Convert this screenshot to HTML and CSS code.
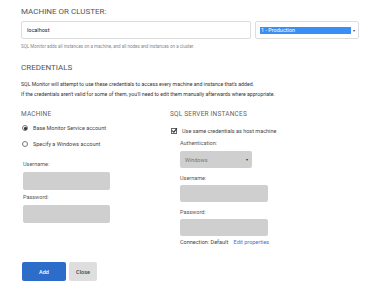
FILE: index.html
```html
<!DOCTYPE html>
<html lang="en">
<head>
    <meta charset="UTF-8">
    <title>Add Machine</title>
    <link rel="stylesheet" href="styles.css">
</head>
<body>
    <div class="page">
        <h2 class="section-title">Machine or cluster:</h2>
        <div class="host-row">
            <input class="text-input host-input" type="text" value="localhost">
            <div class="group-select">
                <span class="group-value">1 - Production</span>
                <span class="caret">&#9662;</span>
            </div>
        </div>
        <p class="hint">SQL Monitor adds all instances on a machine, and all nodes and instances on a cluster.</p>

        <h2 class="section-title creds-title">Credentials</h2>
        <p class="intro">SQL Monitor will attempt to use these credentials to access every machine and instance that's added.<br>
        If the credentials aren't valid for some of them, you'll need to edit them manually afterwards where appropriate.</p>

        <div class="columns">
            <div class="col col-machine">
                <h3 class="col-title">Machine</h3>
                <label class="option">
                    <span class="radio checked"></span>
                    Base Monitor Service account
                </label>
                <label class="option">
                    <span class="radio"></span>
                    Specify a Windows account
                </label>
                <div class="field first-field">
                    <div class="field-label">Username:</div>
                    <div class="grey-input"></div>
                </div>
                <div class="field">
                    <div class="field-label">Password:</div>
                    <div class="grey-input"></div>
                </div>
            </div>

            <div class="col col-sql">
                <h3 class="col-title">SQL Server instances</h3>
                <label class="option check-option">
                    <span class="checkbox">
                        <svg width="7" height="7" viewBox="0 0 7 7"><path d="M1.2 3.6 L2.9 5.2 L5.9 1.4" fill="none" stroke="#333" stroke-width="1.1"/></svg>
                    </span>
                    Use same credentials as host machine
                </label>
                <div class="indent">
                    <div class="field auth-field">
                        <div class="field-label">Authentication:</div>
                        <div class="grey-select">
                            <span>Windows</span>
                            <span class="caret">&#9662;</span>
                        </div>
                    </div>
                    <div class="field">
                        <div class="field-label">Username:</div>
                        <div class="grey-input"></div>
                    </div>
                    <div class="field">
                        <div class="field-label">Password:</div>
                        <div class="grey-input"></div>
                    </div>
                    <div class="connection">Connection: Default <a class="link" href="#">Edit properties</a></div>
                </div>
            </div>
        </div>

        <div class="actions">
            <button class="btn btn-primary">Add</button>
            <button class="btn btn-plain">Close</button>
        </div>
    </div>
</body>
</html>
```

FILE: styles.css
```css
body {
    margin: 0;
    padding: 0;
    font-family: Roboto, 'Liberation Sans', sans-serif;
    color: #333;
    background: #fff;
}

.page {
    padding: 7px 0 0 21px;
}

.section-title {
    margin: 0;
    font-size: 8px;
    line-height: 10px;
    font-weight: 400;
    text-transform: uppercase;
    color: #555;
}

.host-row {
    display: flex;
    gap: 4px;
    margin-top: 4px;
}

.text-input {
    box-sizing: border-box;
    height: 18px;
    border: 1px solid #ddd;
    border-radius: 2px;
    padding: 0 5px;
    font-family: inherit;
    font-size: 5.5px;
    color: #222;
    outline: none;
}

.host-input {
    width: 230px;
}

.group-select {
    box-sizing: border-box;
    width: 104px;
    height: 18px;
    border: 1px solid #ddd;
    border-radius: 2px;
    display: flex;
    align-items: center;
    padding: 0 3px 0 4px;
}

.group-value {
    width: 90px;
    height: 7px;
    line-height: 7px;
    background: #3b8ef3;
    color: #fff;
    font-size: 5.5px;
    padding-left: 1px;
}

.caret {
    margin-left: auto;
    font-size: 4px;
    color: #444;
}

.hint {
    margin: 5px 0 0;
    font-size: 4.5px;
    line-height: 6px;
    color: #888;
}

.creds-title {
    margin-top: 13px;
}

.intro {
    margin: 6px 0 0;
    font-size: 5.2px;
    line-height: 10px;
    color: #333;
}

.columns {
    display: flex;
    margin-top: 11px;
}

.col-machine {
    width: 149px;
}

.col-title {
    margin: 0;
    font-size: 6.5px;
    line-height: 8px;
    font-weight: 400;
    letter-spacing: 0.2px;
    text-transform: uppercase;
    color: #666;
}

.option {
    display: flex;
    align-items: center;
    gap: 5px;
    margin-top: 6px;
    height: 8px;
    font-size: 5.5px;
    color: #444;
}

.option + .option {
    margin-top: 8px;
}

.radio {
    box-sizing: border-box;
    width: 6px;
    height: 6px;
    margin-left: 1px;
    border: 0.7px solid #777;
    border-radius: 50%;
    position: relative;
}

.radio.checked::after {
    content: "";
    position: absolute;
    left: 1.2px;
    top: 1.2px;
    width: 2.6px;
    height: 2.6px;
    border-radius: 50%;
    background: #333;
}

.check-option {
    margin-top: 9px;
}

.checkbox {
    box-sizing: border-box;
    width: 6px;
    height: 6px;
    margin-left: 1px;
    border: 0.7px solid #666;
    display: flex;
    align-items: center;
    justify-content: center;
}

.checkbox svg {
    flex: none;
    margin-top: -1px;
    margin-left: 1px;
}

.field {
    margin-top: 3px;
}

.first-field {
    margin-top: 12px;
}

.field-label {
    font-size: 5.5px;
    line-height: 8px;
    color: #555;
}

.col-machine .field-label {
    padding-left: 2px;
}

.grey-input {
    margin-top: 4px;
    width: 87px;
    height: 18px;
    background: #cfcfcf;
    border-radius: 2px;
}

.col-machine .grey-input {
    margin-left: 2px;
}

.indent {
    padding-left: 10px;
}

.indent .field {
    margin-top: 6px;
}

.indent .auth-field {
    margin-top: 4px;
}

.grey-select {
    margin-top: 4px;
    box-sizing: border-box;
    width: 72px;
    height: 17px;
    background: #cfcfcf;
    border-radius: 2px;
    display: flex;
    align-items: center;
    padding: 0 4px 0 5px;
    font-size: 5.5px;
    color: #777;
}

.grey-select .caret {
    color: #333;
}

.col-sql .grey-input {
    margin-top: 3px;
    width: 88px;
    height: 17px;
}

.connection {
    margin-top: 2px;
    font-size: 5.5px;
    line-height: 8px;
    color: #444;
}

.link {
    margin-left: 4px;
    color: #3a78d0;
    text-decoration: none;
}

.actions {
    display: flex;
    gap: 3px;
    margin-top: 16px;
    padding-left: 1px;
}

.btn {
    height: 19px;
    border: none;
    border-radius: 2px;
    font-family: inherit;
    font-size: 5.5px;
    font-weight: 500;
    cursor: pointer;
}

.btn-primary {
    width: 44px;
    background: #2e6cca;
    color: #fff;
}

.btn-plain {
    width: 28px;
    background: #dedede;
    color: #444;
}
```
